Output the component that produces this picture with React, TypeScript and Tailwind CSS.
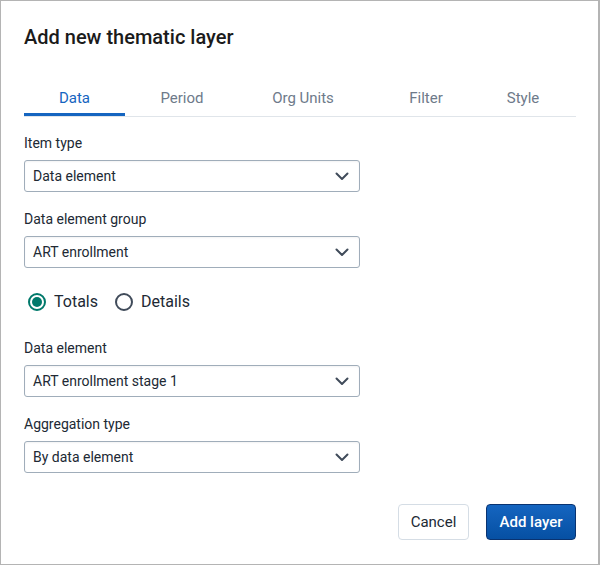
import React from "react";

function Chevron() {
  return (
    <svg width="14" height="9" viewBox="0 0 14 9" fill="none">
      <path d="M1.5 1.5 L7 7 L12.5 1.5" stroke="#404b5a" strokeWidth="2" strokeLinecap="round" strokeLinejoin="round" />
    </svg>
  );
}

function Select({ label, value }: { label: string; value: string }) {
  return (
    <div className="flex flex-col">
      <div className="text-[14px] leading-[17px] text-[#212934] mb-[8px]">{label}</div>
      <div className="w-[336px] h-[32px] border border-[#a0adba] rounded-[3px] flex items-center justify-between pl-[8px] pr-[10px] bg-white shadow-[inset_0_1px_2px_rgba(48,54,60,0.06)]">
        <span className="text-[14px] text-[#212934]">{value}</span>
        <Chevron />
      </div>
    </div>
  );
}

export default function App() {
  const tabs = [
    { name: "Data", w: "w-[101px]", active: true },
    { name: "Period", w: "w-[114px]", active: false },
    { name: "Org Units", w: "w-[128px]", active: false },
    { name: "Filter", w: "w-[118px]", active: false },
    { name: "Style", w: "w-[76px]", active: false },
  ];
  return (
    <div className="w-[600px] h-[565px] bg-white border border-[#b4b4b4] border-r-2 font-['Roboto',sans-serif] text-[#212934] flex flex-col">
      <div className="pl-[23px] pr-[22px] pt-[24px]">
        <h1 className="text-[20px] leading-[24px] font-medium text-[#1b1b1b]">Add new thematic layer</h1>
        <div className="mt-[37px] flex border-b border-[#e0e5ea]">
          {tabs.map((t) => (
            <div key={t.name} className={`${t.w} flex flex-col items-center`}>
              <div className={`text-[15px] leading-[20px] h-[27px] pt-[2px] ${t.active ? "text-[#1565c0]" : "text-[#6e7a8a]"}`}>{t.name}</div>
              <div className={`w-full h-[3px] ${t.active ? "bg-[#1565c0]" : "bg-transparent"}`} />
            </div>
          ))}
        </div>
        <div className="mt-[18px] flex flex-col">
          <Select label="Item type" value="Data element" />
          <div className="mt-[19px]">
            <Select label="Data element group" value="ART enrollment" />
          </div>
          <div className="mt-[23px] flex items-center pl-[4px] h-[22px]">
            <div className="w-[18px] h-[18px] rounded-full border-2 border-[#00796b] flex items-center justify-center">
              <div className="w-[10px] h-[10px] rounded-full bg-[#00796b]" />
            </div>
            <span className="ml-[8px] text-[16px] text-[#212934]">Totals</span>
            <div className="ml-[17px] w-[18px] h-[18px] rounded-full border-2 border-[#404b5a]" />
            <span className="ml-[8px] text-[16px] text-[#212934]">Details</span>
          </div>
          <div className="mt-[27px]">
            <Select label="Data element" value="ART enrollment stage 1" />
          </div>
          <div className="mt-[19px]">
            <Select label="Aggregation type" value="By data element" />
          </div>
        </div>
        <div className="mt-[31px] flex justify-end gap-[17px]">
          <button className="h-[36px] w-[71px] rounded-[4px] border border-[#d5dde5] bg-white text-[15px] text-[#212934]">Cancel</button>
          <button className="h-[36px] w-[90px] rounded-[4px] border border-[#093371] bg-gradient-to-b from-[#1565c0] to-[#0650a3] text-[15px] font-medium text-white">Add layer</button>
        </div>
      </div>
    </div>
  );
}
